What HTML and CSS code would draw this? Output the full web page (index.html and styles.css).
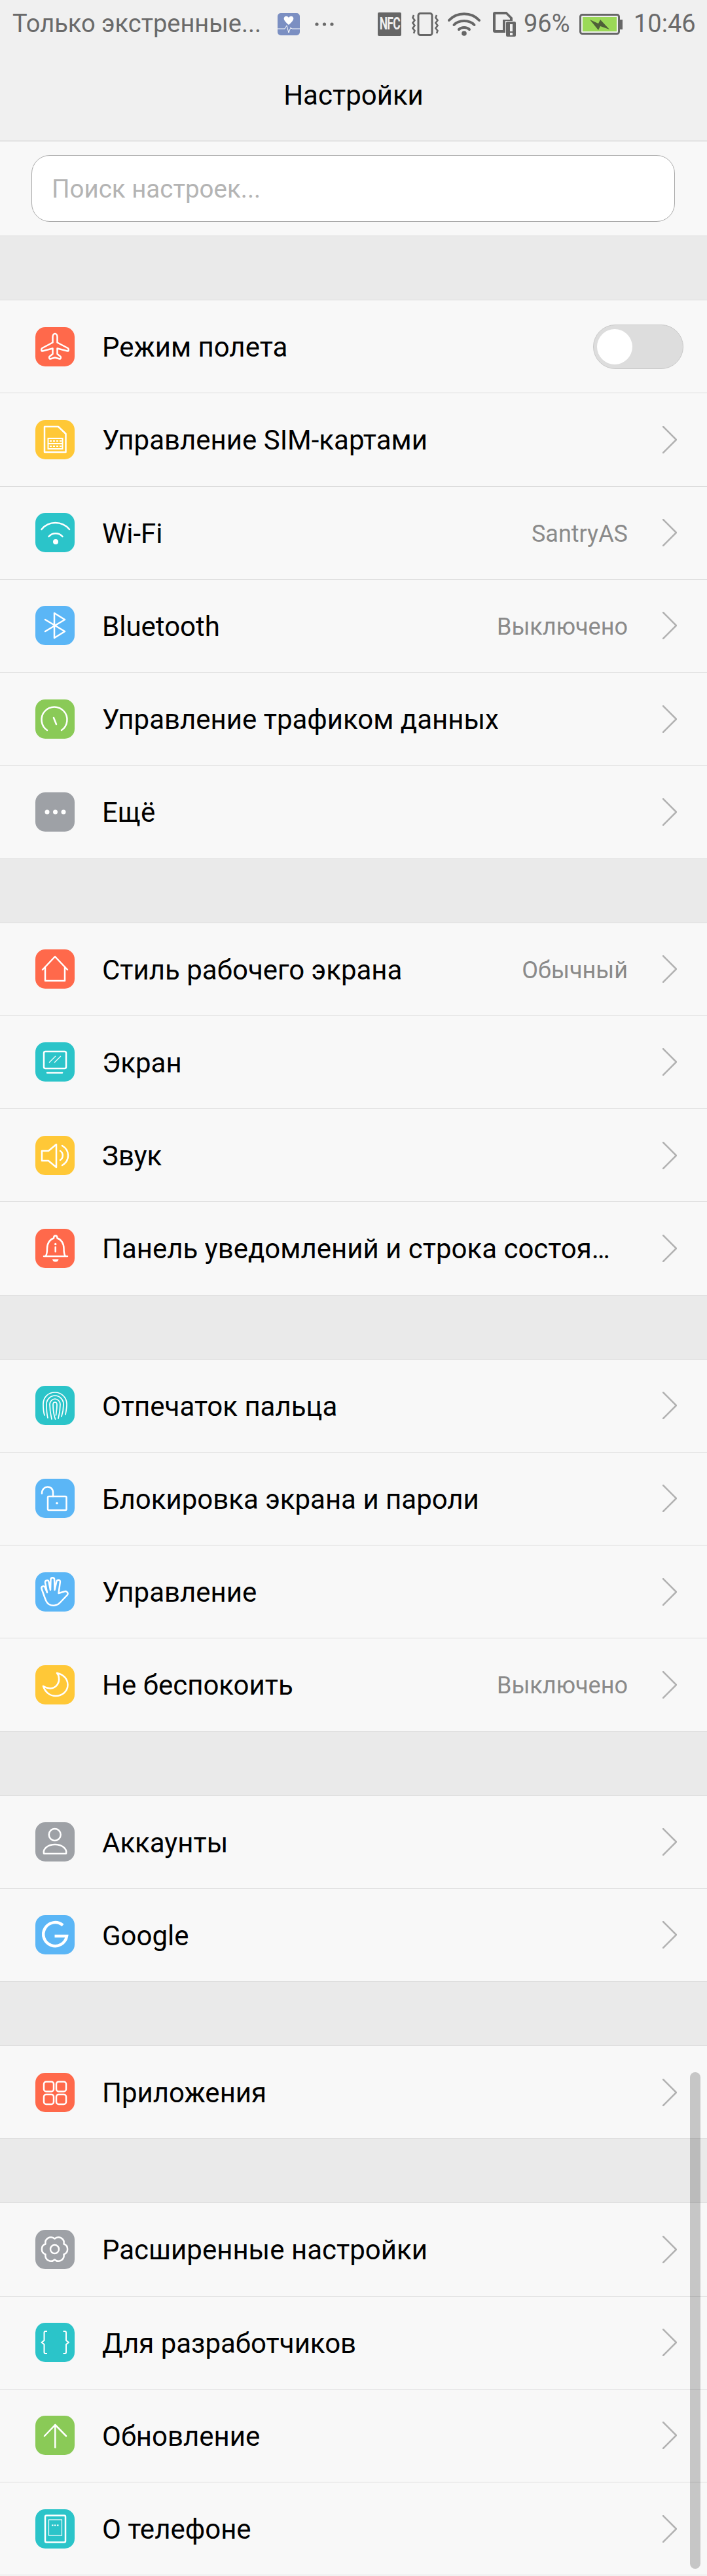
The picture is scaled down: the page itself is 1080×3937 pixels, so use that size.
FILE: index.html
```html
<!DOCTYPE html>
<html lang="ru">
<head>
<meta charset="utf-8">
<title>Настройки</title>
<link rel="stylesheet" href="styles.css">
</head>
<body>
<div class="screen">
  <header class="topbar">
    <div class="status">
      <span class="status-text notice">Только экстренные...</span>
      <svg class="st-health" viewBox="0 0 34 34"><rect width="34" height="34" rx="5" fill="#7b8fc2"/><path d="M17 18 C10 12 9 9 10 7 C11 4 15 4 17 7 C19 4 23 4 24 7 C25 9 24 12 17 18Z" fill="#fff"/><path d="M0 24 H11 L14 19 L17 30 L20 22 L22 24 H34" fill="none" stroke="#fff" stroke-width="1"/></svg>
      <svg class="st-more" viewBox="0 0 29 6"><circle cx="3" cy="3" r="2.6"/><circle cx="14.5" cy="3" r="2.6"/><circle cx="26" cy="3" r="2.6"/></svg>
      <span class="st-nfc"><span class="st-nfc-text">NFC</span></span>
      <svg class="st-vibrate" viewBox="0 0 41 36"><rect x="10" y="1.5" width="21" height="33" rx="3" fill="none" stroke="#666" stroke-width="3"/><path d="M3 4 L1.5 8 L4.5 12 L1.5 16 L4.5 20 L1.5 24 L4.5 28 L3 32 M38 4 L36.5 8 L39.5 12 L36.5 16 L39.5 20 L36.5 24 L39.5 28 L38 32" fill="none" stroke="#666" stroke-width="2.6"/></svg>
      <svg class="st-wifi" viewBox="0 0 50 36"><g fill="none" stroke="#666" stroke-width="4" stroke-linecap="round"><path d="M2 12 C14 -1 36 -1 48 12"/><path d="M9.5 19 C17 11 33 11 40.5 19"/><path d="M17 26 C21 22 29 22 33 26"/></g><circle cx="25" cy="32" r="3.8" fill="#666"/></svg>
      <svg class="st-sim" viewBox="0 0 35 38"><path d="M3 0 H21 L30 9 V14 H19 V32 H3 A3 3 0 0 1 0 29 V3 A3 3 0 0 1 3 0Z M4 4 V28 H15 V12 H26 V10 L20 4Z" fill="#666" fill-rule="evenodd"/><path d="M22 15 H33 A2 2 0 0 1 35 17 V36 A2 2 0 0 1 33 38 H22 A2 2 0 0 1 20 36 V17 A2 2 0 0 1 22 15Z" fill="#666"/><rect x="26" y="19" width="4" height="11" fill="#f0f0f0"/><rect x="26" y="32" width="4" height="4" fill="#f0f0f0"/></svg>
      <span class="status-text pct">96%</span>
      <svg class="st-battery" viewBox="0 0 66 32"><rect x="1.5" y="1.5" width="59" height="29" rx="3" fill="none" stroke="#666" stroke-width="3"/><rect x="5" y="5" width="52" height="22" fill="#9bd957"/><rect x="62" y="9" width="4" height="15" fill="#666"/><path d="M16 9 L29 15 L32 9 L46 24 L32 19 L29 25Z" fill="#4f5f38"/></svg>
      <span class="status-text clock">10:46</span>
    </div>
    <h1 class="title">Настройки</h1>
  </header>

  <div class="search-wrap">
    <div class="search">Поиск настроек...</div>
  </div>
  <div class="gap"></div>

  <section>
    <div class="row">
      <span class="icon red"><svg viewBox="0 0 60 60"><path class="g" d="M30 10 C28 10 26.500 12.500 26.500 15 V23.500 L10.500 32 C8.500 33.500 9 37 11 36.500 L26.500 32.500 V41 L21.500 45 C20.500 46.500 21.500 49 23 48.500 L30 46.500 L37 48.500 C38.500 49 39.500 46.500 38.500 45 L33.500 41 V32.500 L49 36.500 C51 37 51.500 33.500 49.500 32 L33.500 23.500 V15 C33.500 12.500 32 10 30 10Z"/></svg></span>
      <span class="label">Режим полета</span>
      <span class="toggle"><span class="knob"></span></span>
    </div>
    <div class="row">
      <span class="icon yellow"><svg viewBox="0 0 60 60"><path class="g" d="M14 10 H35 L46.500 21 V49 H14Z"/><path class="t" d="M19.500 28 H41.500 V44 H19.500Z M19.500 36 H41.500"/><path class="d" d="M22 32 H40 M22 40 H40"/></svg></span>
      <span class="label">Управление SIM-картами</span>
      <svg class="chev" viewBox="0 0 22 42"><path d="M1 1 L21 21 L1 41"/></svg>
    </div>
    <div class="row">
      <span class="icon teal"><svg viewBox="0 0 60 60"><path class="g" d="M9.500 25 C20 11.500 41 11.500 52 25"/><path class="g" d="M20.500 36 C26 29.500 36 29.500 41.500 36"/><circle class="f" cx="31" cy="44" r="4"/></svg></span>
      <span class="label">Wi-Fi</span>
      <span class="value">SantryAS</span>
      <svg class="chev" viewBox="0 0 22 42"><path d="M1 1 L21 21 L1 41"/></svg>
    </div>
    <div class="row">
      <span class="icon blue"><svg viewBox="0 0 60 60"><path class="g" d="M15 21 L45 39 L29 49 V11 L45 21 L15 39"/></svg></span>
      <span class="label">Bluetooth</span>
      <span class="value">Выключено</span>
      <svg class="chev" viewBox="0 0 22 42"><path d="M1 1 L21 21 L1 41"/></svg>
    </div>
    <div class="row">
      <span class="icon green"><svg viewBox="0 0 60 60"><path class="g" d="M18 47 A19.500 19.500 0 1 1 40 47"/><path class="g" d="M28 28 L32 38"/></svg></span>
      <span class="label">Управление трафиком данных</span>
      <svg class="chev" viewBox="0 0 22 42"><path d="M1 1 L21 21 L1 41"/></svg>
    </div>
    <div class="row">
      <span class="icon gray"><svg viewBox="0 0 60 60"><circle class="f" cx="18" cy="30" r="3.500"/><circle class="f" cx="30.500" cy="30" r="3.500"/><circle class="f" cx="43" cy="30" r="3.500"/></svg></span>
      <span class="label">Ещё</span>
      <svg class="chev" viewBox="0 0 22 42"><path d="M1 1 L21 21 L1 41"/></svg>
    </div>
  </section>
  <div class="gap"></div>

  <section>
    <div class="row">
      <span class="icon red"><svg viewBox="0 0 60 60"><path class="g" d="M11 31 L30 11 L49 31"/><path class="g" d="M15 27 V48 H45 V27"/></svg></span>
      <span class="label">Стиль рабочего экрана</span>
      <span class="value">Обычный</span>
      <svg class="chev" viewBox="0 0 22 42"><path d="M1 1 L21 21 L1 41"/></svg>
    </div>
    <div class="row">
      <span class="icon teal"><svg viewBox="0 0 60 60"><rect class="g" x="13" y="14" width="34" height="26" rx="2.500"/><path class="g" d="M18 46.500 H41"/><path class="h" d="M21 31 L31 21 M29 31 L39 21"/></svg></span>
      <span class="label">Экран</span>
      <svg class="chev" viewBox="0 0 22 42"><path d="M1 1 L21 21 L1 41"/></svg>
    </div>
    <div class="row">
      <span class="icon yellow"><svg viewBox="0 0 60 60"><path class="g" d="M10 23 H20 L32 13 V48 L20 38 H10Z"/><path class="g" d="M38 23 C43 26 43 34 38 37"/><path class="g" d="M41 15 C53 22 53 38 41 45"/></svg></span>
      <span class="label">Звук</span>
      <svg class="chev" viewBox="0 0 22 42"><path d="M1 1 L21 21 L1 41"/></svg>
    </div>
    <div class="row">
      <span class="icon red"><svg viewBox="0 0 60 60"><path class="g" d="M16 41.500 C18 38 18 35 18 30 C18 22 22.500 16 28 14.500 C28 9 33.500 9 33.500 14.500 C39 16 43.500 22 43.500 30 C43.500 35 43.500 38 45.500 41.500"/><path class="g" d="M13 42 H49"/><path class="f" d="M26 46.500 H35.500 A4.750 4 0 0 1 26 46.500Z"/><circle class="f" cx="30.700" cy="23.500" r="1.700"/><path class="g" d="M30.700 28 V35"/></svg></span>
      <span class="label">Панель уведомлений и строка состоя…</span>
      <svg class="chev" viewBox="0 0 22 42"><path d="M1 1 L21 21 L1 41"/></svg>
    </div>
  </section>
  <div class="gap"></div>

  <section>
    <div class="row">
      <span class="icon teal"><svg viewBox="0 0 60 60"><g class="fp"><path d="M14 45 C12 39 12 33 12 28 C12 17 20 10 30 10 C40 10 48 18 48 28 C48 34 47 39 46 44"/><path d="M19 49 C17 41 17 34 17 28 C17 21 23 15 30 15 C37 15 43 21 43 28 C43 35 42 41 40 47"/><path d="M25 51 C23 43 22 36 22 28 C22 24 26 20 30 20 C34 20 38 24 38 28 C38 36 37 43 35 50"/><path d="M30.500 51 C28 44 27 36 27 29 C27 27 28 25 30 25 C32 25 33 27 33 29 C33 36 32 41 31.500 45"/></g></svg></span>
      <span class="label">Отпечаток пальца</span>
      <svg class="chev" viewBox="0 0 22 42"><path d="M1 1 L21 21 L1 41"/></svg>
    </div>
    <div class="row">
      <span class="icon blue"><svg viewBox="0 0 60 60"><rect class="g" x="19" y="27" width="28.500" height="21" rx="1.500"/><circle class="f" cx="33" cy="37.500" r="1.800"/><path class="g" d="M10 22.500 C10 9.500 27 9.500 27 21 V27"/></svg></span>
      <span class="label">Блокировка экрана и пароли</span>
      <svg class="chev" viewBox="0 0 22 42"><path d="M1 1 L21 21 L1 41"/></svg>
    </div>
    <div class="row">
      <span class="icon blue"><svg viewBox="0 0 60 60"><path class="g" d="M21 49 C17 47 16 43 14.500 39 L9.500 25 A2.800 2.800 0 0 1 14.800 23.200 L18 31 L15 15.500 A2.800 2.800 0 0 1 20.500 14.500 L23 27 L23.500 11 A2.800 2.800 0 0 1 29.100 11 L29.500 27 L32.500 13.500 A2.800 2.800 0 0 1 37.900 14.700 L35.500 32 L44 29.500 C47 28 51 31 49 34.500 L38 46 C34 51 26 52 21 49Z"/></svg></span>
      <span class="label">Управление</span>
      <svg class="chev" viewBox="0 0 22 42"><path d="M1 1 L21 21 L1 41"/></svg>
    </div>
    <div class="row">
      <span class="icon yellow"><svg viewBox="0 0 60 60"><path class="g" d="M33 12 C43 14 49.500 21 49.500 30 C49.500 40 41 47 31 47 C22 47 15 41 12 32 C17 35 22 36 26 35 C33 33 37 26 36 20 C36 17 35 14 33 12Z"/></svg></span>
      <span class="label">Не беспокоить</span>
      <span class="value">Выключено</span>
      <svg class="chev" viewBox="0 0 22 42"><path d="M1 1 L21 21 L1 41"/></svg>
    </div>
  </section>
  <div class="gap"></div>

  <section>
    <div class="row">
      <span class="icon gray"><svg viewBox="0 0 60 60"><circle class="g" cx="29.700" cy="19" r="9"/><path class="g" d="M13 48 C11 40 20 34 30 34 C40 34 49 40 47 48Z"/></svg></span>
      <span class="label">Аккаунты</span>
      <svg class="chev" viewBox="0 0 22 42"><path d="M1 1 L21 21 L1 41"/></svg>
    </div>
    <div class="row">
      <span class="icon blue"><svg viewBox="0 0 60 60"><path class="gg" d="M42 15.500 A18 18 0 1 0 48 32 H29.500"/></svg></span>
      <span class="label">Google</span>
      <svg class="chev" viewBox="0 0 22 42"><path d="M1 1 L21 21 L1 41"/></svg>
    </div>
  </section>
  <div class="gap"></div>

  <section>
    <div class="row">
      <span class="icon red"><svg viewBox="0 0 60 60"><rect class="g" x="13" y="13.500" width="15" height="15" rx="3.500"/><rect class="g" x="32" y="13.500" width="15" height="15" rx="3.500"/><rect class="g" x="13" y="33" width="15" height="15" rx="3.500"/><rect class="g" x="32" y="33" width="15" height="15" rx="3.500"/></svg></span>
      <span class="label">Приложения</span>
      <svg class="chev" viewBox="0 0 22 42"><path d="M1 1 L21 21 L1 41"/></svg>
    </div>
  </section>
  <div class="gap"></div>

  <section>
    <div class="row">
      <span class="icon gray"><svg viewBox="0 0 60 60"><path class="g" d="M43.500 21.500 A8.500 8.500 0 0 1 43.500 37.500 A8.500 8.500 0 0 1 29.500 45.500 A8.500 8.500 0 0 1 15.500 37.500 A8.500 8.500 0 0 1 15.500 21.500 A8.500 8.500 0 0 1 29.500 13.500 A8.500 8.500 0 0 1 43.500 21.500Z"/><circle class="g" cx="29.500" cy="29.500" r="6.500"/></svg></span>
      <span class="label">Расширенные настройки</span>
      <svg class="chev" viewBox="0 0 22 42"><path d="M1 1 L21 21 L1 41"/></svg>
    </div>
    <div class="row">
      <span class="icon teal"><svg viewBox="0 0 60 60"><path class="b" d="M18 13 H15.500 A2 2 0 0 0 13.500 15 V27 L9.500 30 L13.500 33 V45 A2 2 0 0 0 15.500 47 H18"/><path class="b" d="M42.500 13 H45 A2 2 0 0 1 47 15 V27 L51 30 L47 33 V45 A2 2 0 0 1 45 47 H42.500"/></svg></span>
      <span class="label">Для разработчиков</span>
      <svg class="chev" viewBox="0 0 22 42"><path d="M1 1 L21 21 L1 41"/></svg>
    </div>
    <div class="row">
      <span class="icon green"><svg viewBox="0 0 60 60"><path class="g" d="M30.300 14 V48.500"/><path class="g" d="M14 31 L30.300 14 L47 31"/></svg></span>
      <span class="label">Обновление</span>
      <svg class="chev" viewBox="0 0 22 42"><path d="M1 1 L21 21 L1 41"/></svg>
    </div>
    <div class="row">
      <span class="icon teal"><svg viewBox="0 0 60 60"><rect class="g" x="15" y="9.500" width="31" height="41" rx="2"/><rect class="h" x="20.500" y="16" width="20" height="24"/><path class="d2" d="M25 24.500 H36"/></svg></span>
      <span class="label">О телефоне</span>
      <svg class="chev" viewBox="0 0 22 42"><path d="M1 1 L21 21 L1 41"/></svg>
    </div>
  </section>

  <div class="scrollbar"></div>
</div>
</body>
</html>
```
FILE: styles.css
```css
* { box-sizing: border-box; }
html, body { margin: 0; padding: 0; }
body { font-family: Roboto, "Noto Sans", sans-serif; background: #f8f8f8; }
.screen { position: relative; width: 1080px; height: 3937px; overflow: hidden; background: #f8f8f8; }

.topbar { height: 216px; background: #f0f0f0; border-bottom: 1px solid #c2c2c2; }
.status { height: 73px; display: flex; align-items: center; padding-left: 19px; color: #6a6a6a; }
.status-text { font-size: 38px; line-height: 73px; color: #6a6a6a; white-space: nowrap; }
.notice { width: 381px; margin-right: 24px; }
.st-health { width: 34px; height: 34px; margin-right: 23px; flex: none; }
.st-more { width: 29px; height: 6px; margin-right: 67px; fill: #6a6a6a; flex: none; }
.st-nfc { width: 36px; height: 36px; margin-right: 16px; background: #666; border-radius: 2px; flex: none; display: flex; justify-content: center; overflow: hidden; }
.st-nfc-text { color: #f0f0f0; font-size: 25px; line-height: 36px; font-weight: 700; white-space: nowrap; transform: scaleX(0.7); letter-spacing: -1px; }
.st-vibrate { width: 41px; height: 36px; margin-right: 14px; flex: none; }
.st-wifi { width: 50px; height: 36px; margin-right: 19px; flex: none; }
.st-sim { width: 35px; height: 38px; margin-right: 12px; flex: none; }
.pct { width: 70px; margin-right: 15px; }
.st-battery { width: 66px; height: 32px; margin-right: 17px; flex: none; }
.clock { width: 93px; }

.title { margin: 0; height: 142px; font-size: 42px; line-height: 146px; font-weight: 400; color: #000; text-align: center; }

.search-wrap { height: 145px; padding: 21px 49px 0 48px; border-bottom: 1px solid #dcdcdc; background: #f8f8f8; }
.search { height: 102px; border: 1px solid #a8a8a8; border-radius: 28px; background: #fff; padding-left: 30px; font-size: 38.500px; line-height: 102px; color: #b4b4b4; }

.gap { height: 98px; background: #eaeaea; border-bottom: 1px solid #dcdcdc; }
.row { height: 142.25px; display: flex; align-items: center; padding: 0 46px 0 54px; border-bottom: 1px solid #dcdcdc; background: #f8f8f8; }

.icon { width: 60px; height: 60px; border-radius: 15px; margin-right: 42px; flex: none; display: block; }
.icon svg { display: block; width: 60px; height: 60px; }
.red { background: #ff694b; }
.yellow { background: #ffc837; }
.teal { background: #2bc4c9; }
.blue { background: #5bb6f6; }
.green { background: #8aca57; }
.gray { background: #9ea1a6; }

.g { fill: none; stroke: #fff; stroke-width: 2.5; stroke-linecap: round; stroke-linejoin: round; }
.gg { fill: none; stroke: #fff; stroke-width: 4.5; }
.t { fill: none; stroke: #fff; stroke-width: 2; }
.d { fill: none; stroke: #fff; stroke-width: 2; stroke-dasharray: 3 2; }
.d2 { fill: none; stroke: #fff; stroke-width: 2; stroke-dasharray: 2.500 1.500; }
.f { fill: #fff; }
.h { fill: none; stroke: #fff; stroke-width: 1.200; }
.b { fill: none; stroke: #fff; stroke-width: 2; stroke-linejoin: round; }
.fp path { fill: none; stroke: #fff; stroke-width: 1.700; stroke-linecap: round; }

.label { flex: 1; font-size: 42px; line-height: 50px; padding-top: 3px; color: #000; white-space: nowrap; }
.value { font-size: 36px; line-height: 44px; padding-top: 3px; color: #8a8a8a; margin-right: 53px; white-space: nowrap; }
.chev { width: 22px; height: 42px; flex: none; }
.chev path { fill: none; stroke: #b2b2b2; stroke-width: 2.500; stroke-linecap: round; stroke-linejoin: round; }

.toggle { width: 138px; height: 68px; border-radius: 34px; background: #dddddd; border: 1px solid #c9c9c9; margin-right: -10px; padding: 6px 0 0 5px; flex: none; }
.knob { display: block; width: 54px; height: 54px; border-radius: 50%; background: #fff; }

.scrollbar { position: absolute; left: 1054px; top: 3167px; width: 16px; height: 759px; border-radius: 8px; background: rgba(0, 0, 0, 0.2); }
```
